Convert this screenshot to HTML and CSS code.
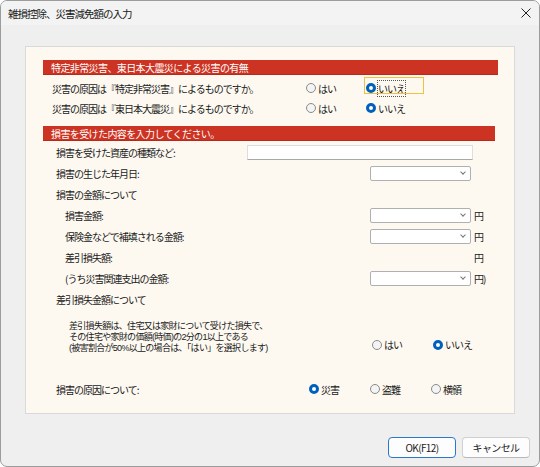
FILE: index.html
```html
<!DOCTYPE html>
<html lang="ja">
<head>
  <meta charset="UTF-8">
  <title>雑損控除、災害減免額の入力</title>
  <link rel="stylesheet" href="styles.css">
</head>
<body>
  <div class="window">
    <div class="titlebar">
      <span class="title">雑損控除、災害減免額の入力</span>
      <svg class="close" width="10" height="10" viewBox="0 0 10 10"><path d="M0.5 0.5 L9.5 9.5 M9.5 0.5 L0.5 9.5" stroke="#222" stroke-width="1"/></svg>
    </div>

    <div class="content">
      <div class="panel">
        <div class="band">特定非常災害、東日本大震災による災害の有無</div>

        <div class="row q q-first">
          <span class="label">災害の原因は『特定非常災害』によるものですか。</span>
          <label class="radio r-yes"><span class="dot"></span>はい</label>
          <label class="radio focus"><span class="dot on"></span><span class="focustext">いいえ</span></label>
        </div>
        <div class="row q">
          <span class="label">災害の原因は『東日本大震災』によるものですか。</span>
          <label class="radio r-yes"><span class="dot"></span>はい</label>
          <label class="radio"><span class="dot on"></span>いいえ</label>
        </div>

        <div class="band band2">損害を受けた内容を入力してください。</div>

        <div class="row f f-first">
          <span class="label">損害を受けた資産の種類など:</span>
          <span class="textbox"></span>
        </div>
        <div class="row f">
          <span class="label">損害の生じた年月日:</span>
          <span class="select"></span>
        </div>
        <div class="row f">
          <span class="label">損害の金額について</span>
        </div>
        <div class="row f sub">
          <span class="label">損害金額:</span>
          <span class="select"></span><span class="yen">円</span>
        </div>
        <div class="row f sub">
          <span class="label">保険金などで補填される金額:</span>
          <span class="select"></span><span class="yen">円</span>
        </div>
        <div class="row f sub">
          <span class="label">差引損失額:</span>
          <span class="noselect"></span><span class="yen">円</span>
        </div>
        <div class="row f sub">
          <span class="label">(うち災害関連支出の金額:</span>
          <span class="select"></span><span class="yen">円)</span>
        </div>
        <div class="row f">
          <span class="label">差引損失金額について</span>
        </div>

        <div class="para">
          <p class="note">差引損失額は、住宅又は家財について受けた損失で、<br>その住宅や家財の価額(時価)の2分の1以上である<br>(被害割合が50%以上の場合は、「はい」を選択します)</p>
          <label class="radio"><span class="dot"></span>はい</label>
          <label class="radio"><span class="dot on"></span>いいえ</label>
        </div>

        <div class="row cause">
          <span class="label">損害の原因について:</span>
          <label class="radio"><span class="dot on"></span>災害</label>
          <label class="radio"><span class="dot"></span>盗難</label>
          <label class="radio"><span class="dot"></span>横領</label>
        </div>
      </div>

      <div class="buttons">
        <button class="btn default">OK(F12)</button>
        <button class="btn">キャンセル</button>
      </div>
    </div>
  </div>
</body>
</html>
```

FILE: styles.css
```css
html, body {
  margin: 0;
  background: #ffffff;
}

body {
  font-family: "Noto Sans CJK JP", "Noto Sans", sans-serif;
  font-size: 10px;
  letter-spacing: -1px;
  color: #1a1a1a;
}

.window {
  width: 540px;
  height: 467px;
  box-sizing: border-box;
  border: 1px solid #9c9c9c;
  border-radius: 7px;
  background: #efefef;
  overflow: hidden;
}

.titlebar {
  height: 24px;
  background: #f3f3f3;
  display: flex;
  align-items: center;
  justify-content: space-between;
  padding: 0 7px;
}

.title {
  font-size: 10.5px;
  letter-spacing: -1px;
  color: #202020;
}

.close {
  margin-right: 1px;
}

.content {
  padding: 21px 0 0 24px;
}

.panel {
  width: 490px;
  height: 368px;
  box-sizing: border-box;
  background: #fdf9f1;
  border: 1px solid #d9d9d9;
  padding-top: 13px;
}

.band {
  margin-left: 17px;
  width: 455px;
  height: 15px;
  background: #cc3322;
  border-bottom: 1px solid #b8291b;
  box-sizing: border-box;
  color: #ffffff;
  line-height: 15px;
  padding-left: 8px;
  letter-spacing: -0.6px;
}

.band2 {
  margin-top: 8px;
  width: 452px;
}

.row {
  display: flex;
  align-items: center;
}

.row .label {
  flex: none;
}

.q {
  height: 20px;
  padding-left: 26px;
}

.q-first {
  margin-top: 3px;
}

.q .label {
  width: 254px;
}

.radio {
  display: flex;
  align-items: center;
  gap: 2px;
}

.dot {
  width: 8px;
  height: 8px;
  border: 1px solid #8a8a8a;
  border-radius: 50%;
  background: #f4f4f4;
  flex: none;
}

.dot.on {
  width: 4px;
  height: 4px;
  border: 3px solid #0060bd;
  background: #ffffff;
}

.q .r-yes {
  width: 60px;
}

.focus {
  position: relative;
}

.focus::after {
  content: "";
  position: absolute;
  left: -2px;
  top: -4px;
  width: 58px;
  height: 15px;
  border: 1px solid #f0c040;
}

.focustext {
  outline: 1px dotted #555;
  outline-offset: 0;
}

.f {
  height: 21px;
  padding-left: 30px;
}

.f-first {
  margin-top: 1px;
}

.f .label {
  width: 314px;
}

.f.sub .label {
  padding-left: 9px;
  width: 305px;
}

.row .label + .textbox {
  margin-left: -123px;
}

.textbox {
  width: 224px;
  height: 13px;
  background: #ffffff;
  border: 1px solid #dedede;
  border-bottom-color: #a8a8a8;
}

.select,
.noselect {
  width: 99px;
  height: 13px;
  flex: none;
}

.select {
  background: #ffffff;
  border: 1px solid #b0b0b0;
  border-radius: 2px;
  position: relative;
}

.select::after {
  content: "";
  position: absolute;
  right: 5px;
  top: 3px;
  width: 3px;
  height: 3px;
  border-right: 1px solid #777;
  border-bottom: 1px solid #777;
  transform: rotate(45deg);
}

.noselect {
  border: 1px solid transparent;
}

.yen {
  margin-left: 3px;
}

.para {
  display: flex;
  align-items: flex-start;
  margin-top: 11px;
  padding-left: 43px;
  height: 34px;
}

.note {
  margin: 0;
  width: 303px;
  font-family: "Liberation Sans", "Noto Sans CJK JP", sans-serif;
  font-size: 9px;
  line-height: 11px;
  letter-spacing: -0.7px;
}

.para .radio {
  width: 61px;
  margin-top: 16px;
}

.cause {
  margin-top: 24px;
  height: 20px;
  padding-left: 30px;
}

.cause .label {
  width: 253px;
}

.cause .radio {
  width: 61px;
}

.buttons {
  display: flex;
  justify-content: flex-end;
  gap: 6px;
  margin-top: 23px;
  padding-right: 9px;
}

.btn {
  width: 68px;
  height: 21px;
  padding: 0;
  font-family: "Noto Sans CJK JP", "Noto Sans", sans-serif;
  font-size: 10px;
  letter-spacing: -0.6px;
  color: #1a1a1a;
  background: #fdfdfd;
  border: 1px solid #d0d0d0;
  border-bottom-color: #b8b8b8;
  border-radius: 4px;
}

.btn.default {
  border: 1px solid #2a78c8;
}
```
